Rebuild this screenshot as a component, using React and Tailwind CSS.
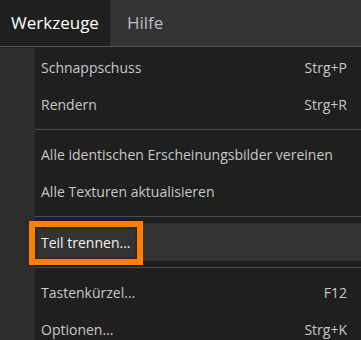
import React from 'react';

const FONT = { fontFamily: '"Open Sans", "Noto Sans", sans-serif' };

function Item({ label, shortcut }) {
  return (
    <div className="flex h-[37px] items-center justify-between pl-[6px] pr-[14px] text-[14px] text-[#c8c8c8]">
      <span>{label}</span>
      {shortcut && <span>{shortcut}</span>}
    </div>
  );
}

function Separator() {
  return (
    <div className="py-[6px]">
      <div className="h-px bg-[#4d4d4d]" />
    </div>
  );
}

export default function App() {
  return (
    <div className="h-[340px] w-[361px] overflow-hidden bg-[#1e1e1e]" style={FONT}>
      {/* menu bar */}
      <div className="flex h-[47px] border-b border-[#575757] bg-[#333333]">
        <div className="flex w-[110px] items-center justify-center bg-[#1f1f1f] text-[17px] text-white">
          Werkzeuge
        </div>
        <div className="flex items-center pl-[17px] text-[17px] text-[#b9bfc4]">Hilfe</div>
      </div>

      {/* dropdown */}
      <div className="flex pt-[1px]">
        <div className="w-[35px] shrink-0 bg-[#2c2c2c]" />
        <div className="flex-1 bg-[#1f1f1f] pt-[1px]">
          <Item label="Schnappschuss" shortcut="Strg+P" />
          <Item label="Rendern" shortcut="Strg+R" />
          <Separator />
          <Item label="Alle identischen Erscheinungsbilder vereinen" />
          <Item label="Alle Texturen aktualisieren" />
          <Separator />
          <div className="relative flex h-[38px] items-center bg-[#333333] pl-[6px] text-[14px] text-[#f2f2f2]">
            <span>Teil trennen...</span>
            <div className="absolute left-[-6px] top-[-2px] h-[44px] w-[114px] border-[6px] border-[#ff8000] shadow-[inset_0_0_3px_rgba(0,0,0,0.6)]" />
          </div>
          <Separator />
          <Item label="Tastenkürzel..." shortcut="F12" />
          <Item label="Optionen..." shortcut="Strg+K" />
        </div>
      </div>
    </div>
  );
}
